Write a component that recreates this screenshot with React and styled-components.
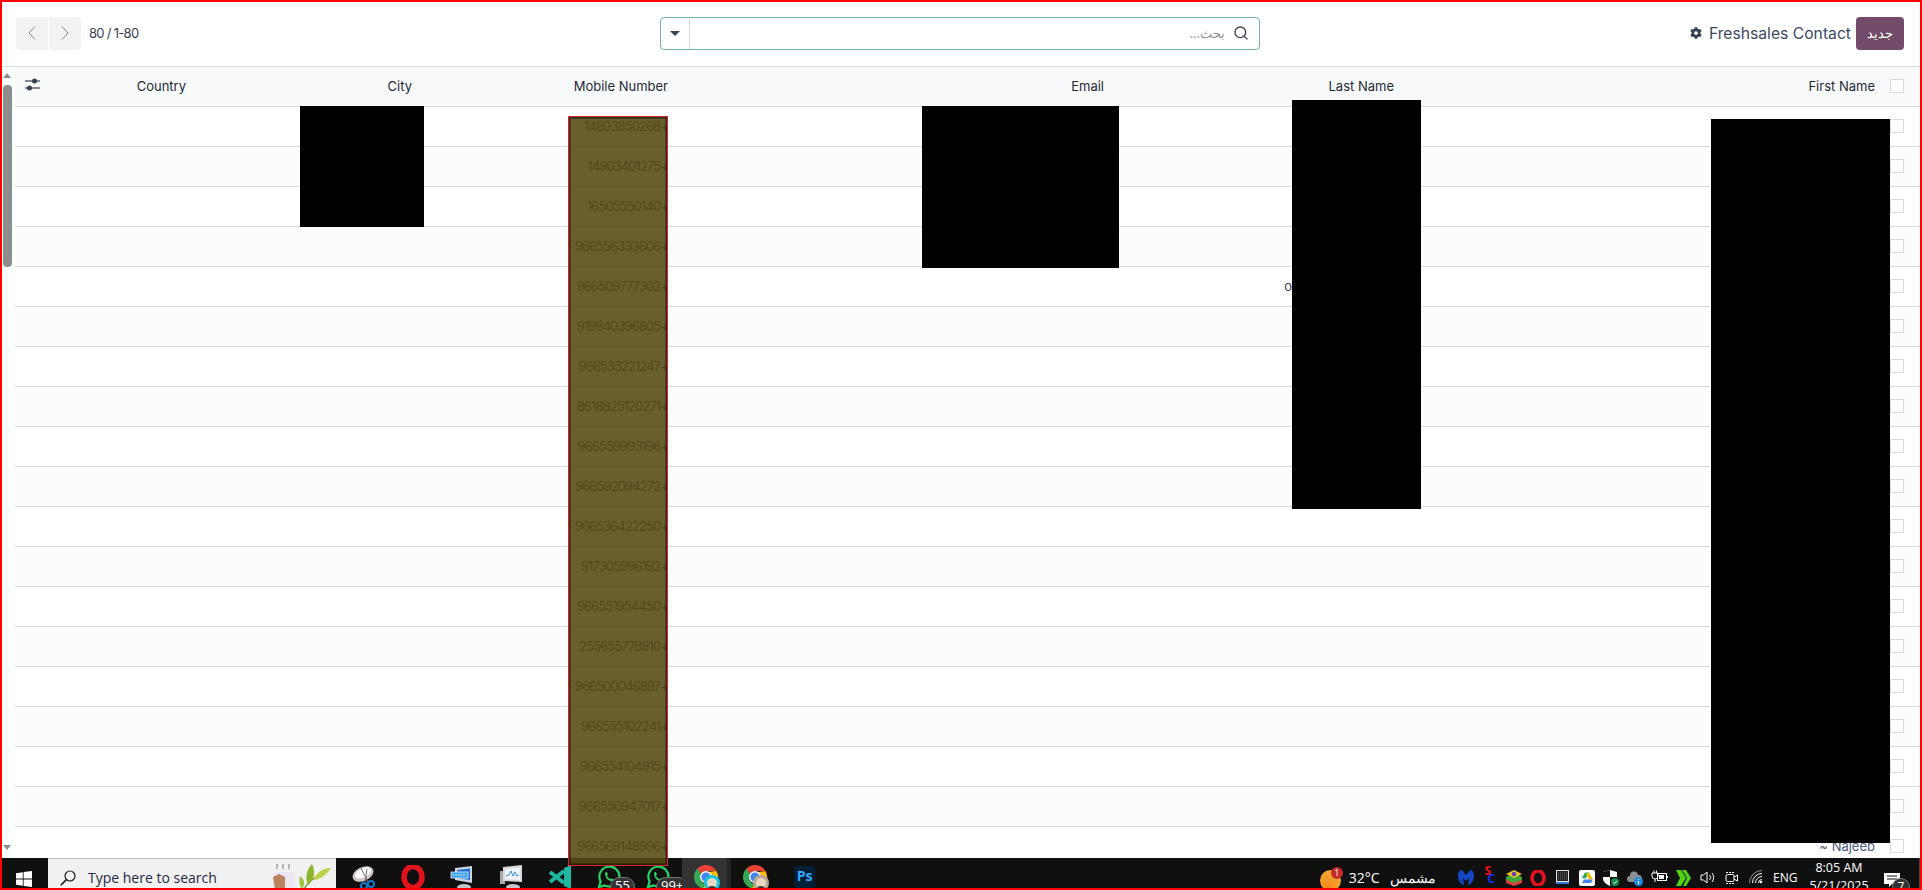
import React from 'react';
import styled, { createGlobalStyle } from 'styled-components';
import { Search } from 'lucide-react';
import { FaCog } from 'react-icons/fa';

const GlobalStyle = createGlobalStyle`
  html, body {
    margin: 0;
    padding: 0;
    background: #fff;
    overflow: hidden;
  }
  * {
    box-sizing: border-box;
  }
`;

const Frame = styled.div`
  position: relative;
  width: 1922px;
  height: 890px;
  border: 2px solid #ff0000;
  display: flex;
  flex-direction: column;
  overflow: hidden;
  font-family: Inter, "Noto Sans", sans-serif;
  color: #374151;
  background: #fff;
`;

const ControlPanel = styled.div`
  direction: rtl;
  flex: 0 0 65px;
  display: grid;
  grid-template-columns: 1fr 600px 1fr;
  align-items: center;
  padding: 0 16px 2px 14px;
  border-bottom: 1px solid #d8dadd;
`;

const Breadcrumb = styled.div`
  display: flex;
  align-items: center;
  gap: 5px;
`;

const NewButton = styled.button`
  width: 48px;
  height: 33px;
  border: none;
  border-radius: 4px;
  background: #714b67;
  color: #fff;
  font-family: "Noto Sans", sans-serif;
  font-size: 13px;
  padding: 0;
`;

const Title = styled.span`
  font-size: 15.7px;
  color: #3b4a63;
  margin-left: 2px;
`;

const SearchBox = styled.div`
  height: 33px;
  display: flex;
  align-items: center;
  border: 1px solid #71b5ae;
  border-radius: 4px;
  background: #fff;
  padding-right: 10px;
  color: #374151;
`;

const SearchInput = styled.input`
  flex: 1;
  min-width: 0;
  height: 100%;
  border: none;
  outline: none;
  background: transparent;
  padding: 0 8px;
  font-family: "Noto Sans", sans-serif;
  font-size: 13px;
  &::placeholder {
    color: #8f949b;
  }
`;

const Caret = styled.button`
  flex: 0 0 29px;
  height: 100%;
  border: none;
  border-right: 1px solid #d8dadd;
  background: transparent;
  display: flex;
  align-items: center;
  justify-content: center;
  padding: 0;
  &::after {
    content: '';
    border-left: 5px solid transparent;
    border-right: 5px solid transparent;
    border-top: 5px solid #374151;
  }
`;

const Pager = styled.div`
  display: flex;
  align-items: center;
  flex-direction: row-reverse;
  justify-content: flex-start;
  gap: 8px;
`;

const PagerCount = styled.span`
  font-size: 13px;
  letter-spacing: -0.7px;
  color: #374151;
`;

const PagerButtons = styled.div`
  display: flex;
  direction: ltr;
  gap: 1px;
`;

const PagerButton = styled.button`
  width: 32px;
  height: 33px;
  border: none;
  background: #f1f2f4;
  color: #7b818a;
  display: flex;
  align-items: center;
  justify-content: center;
  padding: 0;
  border-radius: ${(p) => (p.$left ? '4px 0 0 4px' : '0 4px 4px 0')};
`;

const Body = styled.div`
  flex: 1;
  min-height: 0;
  display: flex;
`;

const Scrollbar = styled.div`
  flex: 0 0 13px;
  display: flex;
  flex-direction: column;
  align-items: flex-start;
  padding: 6px 0 8px 1px;
`;

const ScrollArrow = styled.div`
  width: 0;
  height: 0;
  border-left: 4.5px solid transparent;
  border-right: 4.5px solid transparent;
  ${(p) => (p.$down
    ? 'border-top: 5px solid #8d8d8d; margin-top: auto;'
    : 'border-bottom: 5px solid #8d8d8d;')}
`;

const ScrollThumb = styled.div`
  width: 9px;
  height: 182px;
  margin-top: 7px;
  border-radius: 4px;
  background: #8d8d8d;
`;

const ListWrap = styled.div`
  flex: 1;
  min-width: 0;
  overflow: hidden;
`;

const List = styled.table`
  direction: rtl;
  width: 1905px;
  table-layout: fixed;
  border-collapse: separate;
  border-spacing: 0;
`;

const HeadCell = styled.th`
  height: 40px;
  padding: 0 8px 2px;
  background: #f8f9fa;
  border-bottom: 1px solid #d8dadd;
  font-size: 13px;
  font-weight: 400;
  color: #1f2937;
  text-align: right;
  white-space: nowrap;
`;

const OptionsCell = styled(HeadCell)`
  padding-right: 10px;
`;

const Row = styled.tr`
  background: ${(p) => (p.$odd ? '#fcfcfc' : '#fff')};
`;

const Cell = styled.td`
  height: 40px;
  padding: 0 8px 2px;
  border-bottom: 1px solid #d8dadd;
  font-size: 13px;
  color: #374151;
  text-align: right;
  white-space: nowrap;
`;

const PhoneCell = styled(Cell)`
  letter-spacing: -0.9px;
`;

const NameCell = styled(Cell)`
  color: #4a5a80;
`;

const Check = styled.span`
  display: block;
  width: 14px;
  height: 14px;
  margin-right: 8px;
  border: 1px solid #d8dadd;
  background: #fff;
`;

const Tail = styled.span`
  display: inline-block;
  margin-right: 102px;
`;

const Redaction = styled.div`
  position: absolute;
  left: ${(p) => p.$x - 2}px;
  top: ${(p) => p.$y - 2}px;
  width: ${(p) => p.$w}px;
  height: ${(p) => p.$h}px;
  background: #000;
`;

const Highlight = styled.div`
  position: absolute;
  left: 566px;
  top: 114px;
  width: 100px;
  height: 750px;
  background: rgba(85, 74, 20, 0.89);
  border: 1px solid #e0262e;
  box-shadow: inset 0 0 0 1.5px rgba(0, 0, 0, 0.55);
`;

const Taskbar = styled.div`
  flex: 0 0 30px;
  display: flex;
  align-items: flex-start;
  background: #101010;
  color: #fff;
  overflow: hidden;
  font-family: "Open Sans", "Noto Sans", sans-serif;
`;

const StartButton = styled.div`
  flex: 0 0 46px;
  height: 30px;
  padding: 12px 0 0 14px;
`;

const TaskSearch = styled.div`
  flex: 0 0 288px;
  height: 30px;
  display: flex;
  align-items: flex-start;
  padding: 11px 0 0 12px;
  background: #f1f1f1;
  border-top: 1px solid #bdbdbd;
  color: #1f2a44;
`;

const TaskSearchText = styled.span`
  margin: -2px 0 0 12px;
  font-size: 14px;
  line-height: 20px;
  white-space: nowrap;
`;

const Decoration = styled.span`
  display: flex;
  margin: -7px 0 0 auto;
  gap: 3px;
  padding-right: 5px;
`;

const AppStrip = styled.div`
  display: flex;
  padding-left: 3px;
`;

const AppSlot = styled.div`
  position: relative;
  flex: 0 0 49px;
  height: 30px;
  display: flex;
  justify-content: center;
  padding-top: 7px;
  background: ${(p) => (p.$active ? 'linear-gradient(90deg, #333 0 45px, #242424 45px)' : 'transparent')};
`;

const CountBadge = styled.span`
  position: absolute;
  top: 19px;
  left: ${(p) => p.$left}px;
  min-width: 20px;
  height: 20px;
  padding: 0 4px;
  border-radius: 10px;
  border: 1px solid #777;
  background: #333;
  color: #fff;
  font-size: 13px;
  line-height: 15px;
  text-align: center;
`;

const PsTile = styled.span`
  width: 21px;
  height: 22px;
  margin-top: 1px;
  border-radius: 3px;
  background: #001e36;
  color: #31a8ff;
  font-family: "Open Sans", sans-serif;
  font-size: 14px;
  font-weight: 700;
  line-height: 20px;
  text-align: center;
`;

const Weather = styled.div`
  position: relative;
  display: flex;
  align-items: center;
  margin-left: auto;
  padding-top: 9px;
  height: 30px;
  font-size: 14px;
  white-space: nowrap;
`;

const Sun = styled.span`
  position: relative;
  width: 21px;
  height: 21px;
  margin: 5px 8px 0 0;
  border-radius: 50%;
  background: radial-gradient(circle at 35% 80%, #f28a1c, #f6b13a);
`;

const SunBadge = styled.span`
  position: absolute;
  top: -3px;
  right: -2px;
  width: 12px;
  height: 12px;
  border-radius: 50%;
  background: #c42b2b;
  color: #fff;
  font-size: 9px;
  line-height: 12px;
  text-align: center;
`;

const WeatherWord = styled.span`
  direction: rtl;
  margin: 0 18px 0 10px;
  font-family: "Noto Sans", sans-serif;
  font-size: 13.5px;
`;

const Tray = styled.div`
  display: flex;
`;

const TraySlot = styled.div`
  flex: 0 0 24.2px;
  height: 30px;
  display: flex;
  justify-content: center;
  padding-top: 12px;
`;

const SplitLetters = styled.span`
  display: flex;
  flex-direction: column;
  margin-top: -3px;
  font-size: 12px;
  font-weight: 700;
  line-height: 8px;
`;

const Letter = styled.span`
  color: ${(p) => p.$color};
  margin-left: ${(p) => p.$shift}px;
`;

const Lang = styled.div`
  flex: 0 0 39px;
  height: 30px;
  padding: 10px 0 0 5px;
  font-size: 12px;
  line-height: 20px;
`;

const Clock = styled.div`
  flex: 0 0 64px;
  display: flex;
  flex-direction: column;
  align-items: center;
  padding-top: 1px;
  font-size: 12.5px;
  line-height: 18px;
  white-space: nowrap;
`;

const Notify = styled.div`
  position: relative;
  flex: 0 0 42px;
  height: 30px;
  padding: 13px 0 0 13px;
`;

const NotifyBadge = styled.span`
  position: absolute;
  top: 20px;
  left: 21px;
  width: 18px;
  height: 18px;
  border-radius: 50%;
  border: 1px solid #777;
  background: #333;
  font-size: 12px;
  line-height: 16px;
  text-align: center;
`;

const DesktopEdge = styled.div`
  flex: 0 0 1px;
  height: 30px;
  margin-left: 6px;
  background: #444;
`;

const phones = [
  '+14803850268', '+14903401275', '+16505550140', '+966556333606', '+966509777302',
  '+919940396805', '+966533221247', '+8618825120271', '+966559993196', '+966592094272',
  '+966536422250', '+917305996192', '+966551954450', '+255655778910', '+966500046897',
  '+966555102241', '+966554104915', '+966550947017', '+966569148996',
];

const PagerArrow = ({ d }) => (
  <svg width="8" height="14" viewBox="0 0 8 14" fill="none" stroke="currentColor" strokeWidth="1">
    <path d={d} />
  </svg>
);

const SliderIcon = () => (
  <svg width="15" height="13" viewBox="0 0 15 13" fill="#374151">
    <rect x="0" y="2.4" width="15" height="1.2" />
    <circle cx="9.5" cy="3" r="2.5" />
    <rect x="0" y="9.4" width="15" height="1.2" />
    <circle cx="4.5" cy="10" r="2.5" />
  </svg>
);

const WindowsLogo = () => (
  <svg width="16" height="16" viewBox="0 0 16 16" fill="#fff">
    <path d="M0 2.2 6.8 1.2V7.6H0ZM7.6 1.1 16 0V7.6H7.6ZM0 8.4H6.8V14.8L0 13.8ZM7.6 8.4H16V16L7.6 14.9Z" />
  </svg>
);

const Magnifier = () => (
  <svg width="16" height="16" viewBox="0 0 16 16" fill="none" stroke="#1b1b1b" strokeWidth="1.2">
    <circle cx="10" cy="6" r="5" />
    <path d="M6.4 9.6 .8 15.2" strokeWidth="1.6" />
  </svg>
);

const TeaCup = () => (
  <svg width="24" height="28" viewBox="0 0 24 28">
    <path d="M5 6C4 4 6 3 5 1M11 6C10 4 12 3 11 1M17 6C16 4 18 3 17 1" stroke="#9a9a9a" fill="none" strokeWidth="1.4" />
    <rect x="1" y="9" width="22" height="19" rx="3" fill="#ece6f2" />
    <path d="M1 14 7 11 13 14V26H3Z" fill="#b98560" />
  </svg>
);

const Leaves = () => (
  <svg width="32" height="28" viewBox="0 0 32 28">
    <path d="M4 28C8 20 14 15 22 11" stroke="#5d8b1f" fill="none" strokeWidth="1.2" />
    <path d="M9 22C6 16 7 7 13 1 17 9 15 17 9 22Z" fill="#8db52f" />
    <path d="M3 26C0 22 0 17 1 13 5 16 7 21 3 26Z" fill="#a0c43c" />
    <path d="M14 17C18 9 24 5 32 5 28 11 22 17 14 17Z" fill="#bcd24a" />
  </svg>
);

const SnipIcon = () => (
  <svg width="24" height="26" viewBox="0 0 24 26">
    <ellipse cx="11" cy="9" rx="11" ry="7" fill="#cfc8c6" transform="rotate(-25 11 9)" />
    <ellipse cx="11" cy="8" rx="8.5" ry="4.5" fill="#fff" transform="rotate(-25 11 8)" />
    <path d="M9 3 16 17M15 4 13 17" stroke="#7a6a6a" fill="none" />
    <circle cx="12" cy="21" r="3" fill="none" stroke="#1877c9" strokeWidth="2" />
    <circle cx="19" cy="19" r="3" fill="none" stroke="#1877c9" strokeWidth="2" />
  </svg>
);

const OperaIcon = ({ size = 24 }) => (
  <svg width={size} height={size} viewBox="0 0 24 24">
    <ellipse cx="12" cy="12" rx="9" ry="10.6" fill="none" stroke="#e0141e" strokeWidth="5.5" />
  </svg>
);

const KeyboardMonitor = () => (
  <svg width="24" height="26" viewBox="0 0 24 26">
    <path d="M5 3 22 1V18L5 15Z" fill="#c9d4e3" />
    <path d="M7 5 20 3.5V15L7 13Z" fill="#1d6fd1" />
    <rect x="1" y="7" width="17" height="6" fill="#39a0ea" stroke="#e6f2fb" strokeWidth="0.8" />
    <path d="M3 10H16" stroke="#fff" strokeDasharray="1.5 1" />
    <ellipse cx="14" cy="22" rx="7" ry="3" fill="#c3c6ca" />
  </svg>
);

const ActivityMonitor = () => (
  <svg width="24" height="26" viewBox="0 0 24 26">
    <rect x="1" y="6" width="5" height="13" fill="#aaa" />
    <path d="M4 2 23 0V17L4 16Z" fill="#d9d9d9" />
    <path d="M6 4 21 2.5V15L6 14Z" fill="#eef4fb" />
    <path d="M7 11 10 10 12 6 14 11 16 7 18 11 20 10" stroke="#3d8fd9" fill="none" strokeWidth="1" />
    <ellipse cx="14" cy="22" rx="7" ry="3" fill="#c3c6ca" />
  </svg>
);

const VsIcon = () => (
  <svg width="24" height="24" viewBox="0 0 24 24" fill="#1fb5a0">
    <path d="M16 3 23 0V24L16 21Z" />
    <path d="M2 7 16 18M2 17 16 6" stroke="#1fb5a0" strokeWidth="4" />
  </svg>
);

const WhatsAppIcon = () => (
  <svg width="24" height="24" viewBox="0 0 24 24" fill="none" stroke="#25d366" strokeWidth="2.2">
    <path d="M2 22 3.6 16.4A10 10 0 1 1 7.6 20.4Z" />
    <path d="M8 7.5C8 13 11 16 16.5 16.5L17 14.5 14.5 13.3 13.5 14.3C12 13.5 10.7 12.2 10 10.8L11 9.6 9.8 7Z" fill="#25d366" stroke="none" />
  </svg>
);

const ChromeIcon = ({ accent }) => (
  <svg width="26" height="26" viewBox="0 0 26 26">
    <path d="M12 0A12 12 0 0 1 22.4 6H12A6 6 0 0 0 6.8 9L3.4 3.6A12 12 0 0 1 12 0Z" fill="#ea4335" />
    <path d="M3.4 3.6 9 12A3 3 0 0 0 12 18L8.6 23.5A12 12 0 0 1 3.4 3.6Z" fill="#34a853" />
    <path d="M22.4 6A12 12 0 0 1 8.6 23.5L14 15.5A6 6 0 0 0 15 7Z" fill="#fbbc05" />
    <circle cx="12" cy="12" r="6" fill="#fff" />
    <circle cx="12" cy="12" r="4.6" fill="#4285f4" />
    <circle cx="18" cy="18" r="8" fill={accent} />
    <circle cx="18" cy="18" r="5" fill="#e9d9c4" />
    <path d="M14 24C14 20 22 20 22 24Z" fill="#3b3b3b" />
  </svg>
);

const MalwareIcon = () => (
  <svg width="16" height="16" viewBox="0 0 16 16" fill="#1446c0">
    <path d="M0 6C0 2 2 0 4 0L8 5 12 0C14 0 16 2 16 6 16 10 14 14 10 15L11 8 8 11 5 8 6 15C2 14 0 10 0 6Z" />
  </svg>
);

const StackIcon = () => (
  <svg width="16" height="16" viewBox="0 0 16 16">
    <path d="M0 10 8 6 16 10V13L8 16 0 13Z" fill="#e13b3b" />
    <path d="M0 7 8 3 16 7V10L8 13 0 10Z" fill="#3ea63a" />
    <path d="M0 4 8 0 16 4 8 8Z" fill="#e7c22f" />
    <circle cx="8" cy="4" r="2.2" fill="#6a3fb0" />
  </svg>
);

const GridTile = () => (
  <svg width="13" height="14" viewBox="0 0 13 14">
    <rect width="13" height="14" fill="#e4e4e4" />
    <rect x="1" y="1" width="11" height="10" fill="#222" />
    <path d="M2 3H11M2 5H11M2 7H11M2 9H11" stroke="#666" strokeDasharray="1 1" />
    <rect y="12" width="13" height="2" fill="#2b7bd3" />
  </svg>
);

const DriveIcon = () => (
  <svg width="16" height="16" viewBox="0 0 16 16">
    <rect width="16" height="16" rx="2" fill="#fff" />
    <path d="M6 2.5H10L6.8 8.2H2.8Z" fill="#1fa463" />
    <path d="M10 2.5 14 9.5H10L6.8 3.8Z" fill="#fbbc05" />
    <path d="M5 9.5H14L12 13H3Z" fill="#4285f4" />
  </svg>
);

const ShieldIcon = () => (
  <svg width="16" height="16" viewBox="0 0 16 16">
    <path d="M7 0 14 2V8C14 12 11 14 7 16 3 14 0 12 0 8V2Z" fill="#fff" />
    <path d="M7 0V7H0V2ZM7 7H14V8C14 12 11 14 7 16Z" fill="#111" />
    <circle cx="12" cy="12" r="4" fill="#158a4c" />
    <path d="M10 12 11.5 13.5 14 10.8" stroke="#fff" fill="none" />
  </svg>
);

const CloudInfo = () => (
  <svg width="16" height="16" viewBox="0 0 16 16">
    <path d="M3 12A3 3 0 0 1 3 6 4 4 0 0 1 11 5 3.5 3.5 0 0 1 12 12Z" fill="#8a8f96" />
    <circle cx="11.5" cy="11.5" r="4.5" fill="#1e88e5" />
    <path d="M11.5 9V10M11.5 11V14" stroke="#fff" strokeWidth="1.2" />
  </svg>
);

const PlugBattery = () => (
  <svg width="17" height="14" viewBox="0 0 17 14" fill="none" stroke="#fff">
    <path d="M1 3H7V6A3 3 0 0 1 1 6ZM3 3V.5M5.5 3V.5M4 9V12" />
    <rect x="6.5" y="3.5" width="9" height="7" />
    <rect x="8" y="5" width="5" height="4" fill="#fff" stroke="none" />
    <path d="M16.5 6V8" />
  </svg>
);

const GreenChevrons = () => (
  <svg width="15" height="16" viewBox="0 0 15 16" fill="#4fd10f">
    <path d="M0 0H5L10 8 5 16H0L4 8Z" />
    <path d="M6 0H10L15 8 10 16H7L11 8Z" />
  </svg>
);

const SpeakerIcon = () => (
  <svg width="16" height="15" viewBox="0 0 16 15" fill="none" stroke="#fff">
    <path d="M1 5H3.5L7 2V13L3.5 10H1Z" />
    <path d="M9.5 5A3.5 3.5 0 0 1 9.5 10M12 3A7 7 0 0 1 12 12" />
  </svg>
);

const MeetIcon = () => (
  <svg width="13" height="16" viewBox="0 0 13 16" fill="none" stroke="#fff">
    <path d="M1 2.5H9M1 13.5H9" strokeDasharray="2 1" />
    <rect x="1" y="4.5" width="8" height="7" rx="1.5" />
    <path d="M9 7 12.5 5V11L9 9" />
  </svg>
);

const WifiIcon = () => (
  <svg width="14" height="14" viewBox="0 0 14 14" fill="none" stroke="#fff">
    <path d="M.5 13A12.5 12.5 0 0 1 13 .5" strokeOpacity="0.55" />
    <path d="M3.5 13A9.5 9.5 0 0 1 13 3.5M6.5 13A6.5 6.5 0 0 1 13 6.5M9.5 13A3.5 3.5 0 0 1 13 9.5" />
    <circle cx="12" cy="12" r="1.3" fill="#fff" stroke="none" />
  </svg>
);

const BubbleIcon = () => (
  <svg width="16" height="15" viewBox="0 0 16 15" fill="#fff">
    <path d="M0 0H16V11H8L5 14V11H0Z" />
    <path d="M3 3H13M3 6H13" stroke="#101010" />
  </svg>
);

export default function App() {
  return (
    <>
      <GlobalStyle />
      <Frame>
        <ControlPanel>
          <Breadcrumb>
            <NewButton>جديد</NewButton>
            <Title>Freshsales Contact</Title>
            <FaCog size={12} color="#374151" />
          </Breadcrumb>
          <SearchBox>
            <Search size={16} strokeWidth={2} />
            <SearchInput placeholder="بحث..." />
            <Caret />
          </SearchBox>
          <Pager>
            <PagerButtons>
              <PagerButton $left><PagerArrow d="M7 .5 1 7 7 13.5" /></PagerButton>
              <PagerButton><PagerArrow d="M1 .5 7 7 1 13.5" /></PagerButton>
            </PagerButtons>
            <PagerCount>1-80 / 80</PagerCount>
          </Pager>
        </ControlPanel>
        <Body>
          <Scrollbar>
            <ScrollArrow />
            <ScrollThumb />
            <ScrollArrow $down />
          </Scrollbar>
          <ListWrap>
            <List>
              <colgroup>
                <col width="37" />
                <col width="481" />
                <col width="290" />
                <col width="436" />
                <col width="256" />
                <col width="226" />
                <col width="144" />
                <col width="35" />
              </colgroup>
              <thead>
                <tr>
                  <HeadCell><Check /></HeadCell>
                  <HeadCell>First Name</HeadCell>
                  <HeadCell>Last Name</HeadCell>
                  <HeadCell>Email</HeadCell>
                  <HeadCell>Mobile Number</HeadCell>
                  <HeadCell>City</HeadCell>
                  <HeadCell>Country</HeadCell>
                  <OptionsCell><SliderIcon /></OptionsCell>
                </tr>
              </thead>
              <tbody>
                {phones.map((phone, i) => (
                  <Row key={phone} $odd={i % 2 === 1}>
                    <Cell><Check /></Cell>
                    <NameCell>{i === 18 ? 'Najeeb ~' : ''}</NameCell>
                    <Cell>{i === 4 ? <Tail>o</Tail> : ''}</Cell>
                    <Cell />
                    <PhoneCell>{phone}</PhoneCell>
                    <Cell />
                    <Cell />
                    <Cell />
                  </Row>
                ))}
              </tbody>
            </List>
          </ListWrap>
        </Body>
        <Taskbar>
          <StartButton><WindowsLogo /></StartButton>
          <TaskSearch>
            <Magnifier />
            <TaskSearchText>Type here to search</TaskSearchText>
            <Decoration>
              <TeaCup />
              <Leaves />
            </Decoration>
          </TaskSearch>
          <AppStrip>
            <AppSlot><SnipIcon /></AppSlot>
            <AppSlot><OperaIcon /></AppSlot>
            <AppSlot><KeyboardMonitor /></AppSlot>
            <AppSlot><ActivityMonitor /></AppSlot>
            <AppSlot><VsIcon /></AppSlot>
            <AppSlot><WhatsAppIcon /><CountBadge $left={26}>55</CountBadge></AppSlot>
            <AppSlot><WhatsAppIcon /><CountBadge $left={23}>99+</CountBadge></AppSlot>
            <AppSlot $active><ChromeIcon accent="#16c5e0" /></AppSlot>
            <AppSlot><ChromeIcon accent="#b9a793" /></AppSlot>
            <AppSlot><PsTile>Ps</PsTile></AppSlot>
          </AppStrip>
          <Weather>
            <Sun><SunBadge>1</SunBadge></Sun>
            <span>32°C</span>
            <WeatherWord>مشمس</WeatherWord>
          </Weather>
          <Tray>
            <TraySlot><MalwareIcon /></TraySlot>
            <TraySlot>
              <SplitLetters>
                <Letter $color="#f01010" $shift={0}>S</Letter>
                <Letter $color="#1030f0" $shift={3}>C</Letter>
              </SplitLetters>
            </TraySlot>
            <TraySlot><StackIcon /></TraySlot>
            <TraySlot><OperaIcon size={16} /></TraySlot>
            <TraySlot><GridTile /></TraySlot>
            <TraySlot><DriveIcon /></TraySlot>
            <TraySlot><ShieldIcon /></TraySlot>
            <TraySlot><CloudInfo /></TraySlot>
            <TraySlot><PlugBattery /></TraySlot>
            <TraySlot><GreenChevrons /></TraySlot>
            <TraySlot><SpeakerIcon /></TraySlot>
            <TraySlot><MeetIcon /></TraySlot>
            <TraySlot><WifiIcon /></TraySlot>
          </Tray>
          <Lang>ENG</Lang>
          <Clock>
            <span>8:05 AM</span>
            <span>5/21/2025</span>
          </Clock>
          <Notify>
            <BubbleIcon />
            <NotifyBadge>7</NotifyBadge>
          </Notify>
          <DesktopEdge />
        </Taskbar>
        <Highlight />
        <Redaction $x={300} $y={106} $w={124} $h={121} />
        <Redaction $x={922} $y={106} $w={197} $h={162} />
        <Redaction $x={1292} $y={100} $w={129} $h={409} />
        <Redaction $x={1711} $y={119} $w={179} $h={724} />
      </Frame>
    </>
  );
}
